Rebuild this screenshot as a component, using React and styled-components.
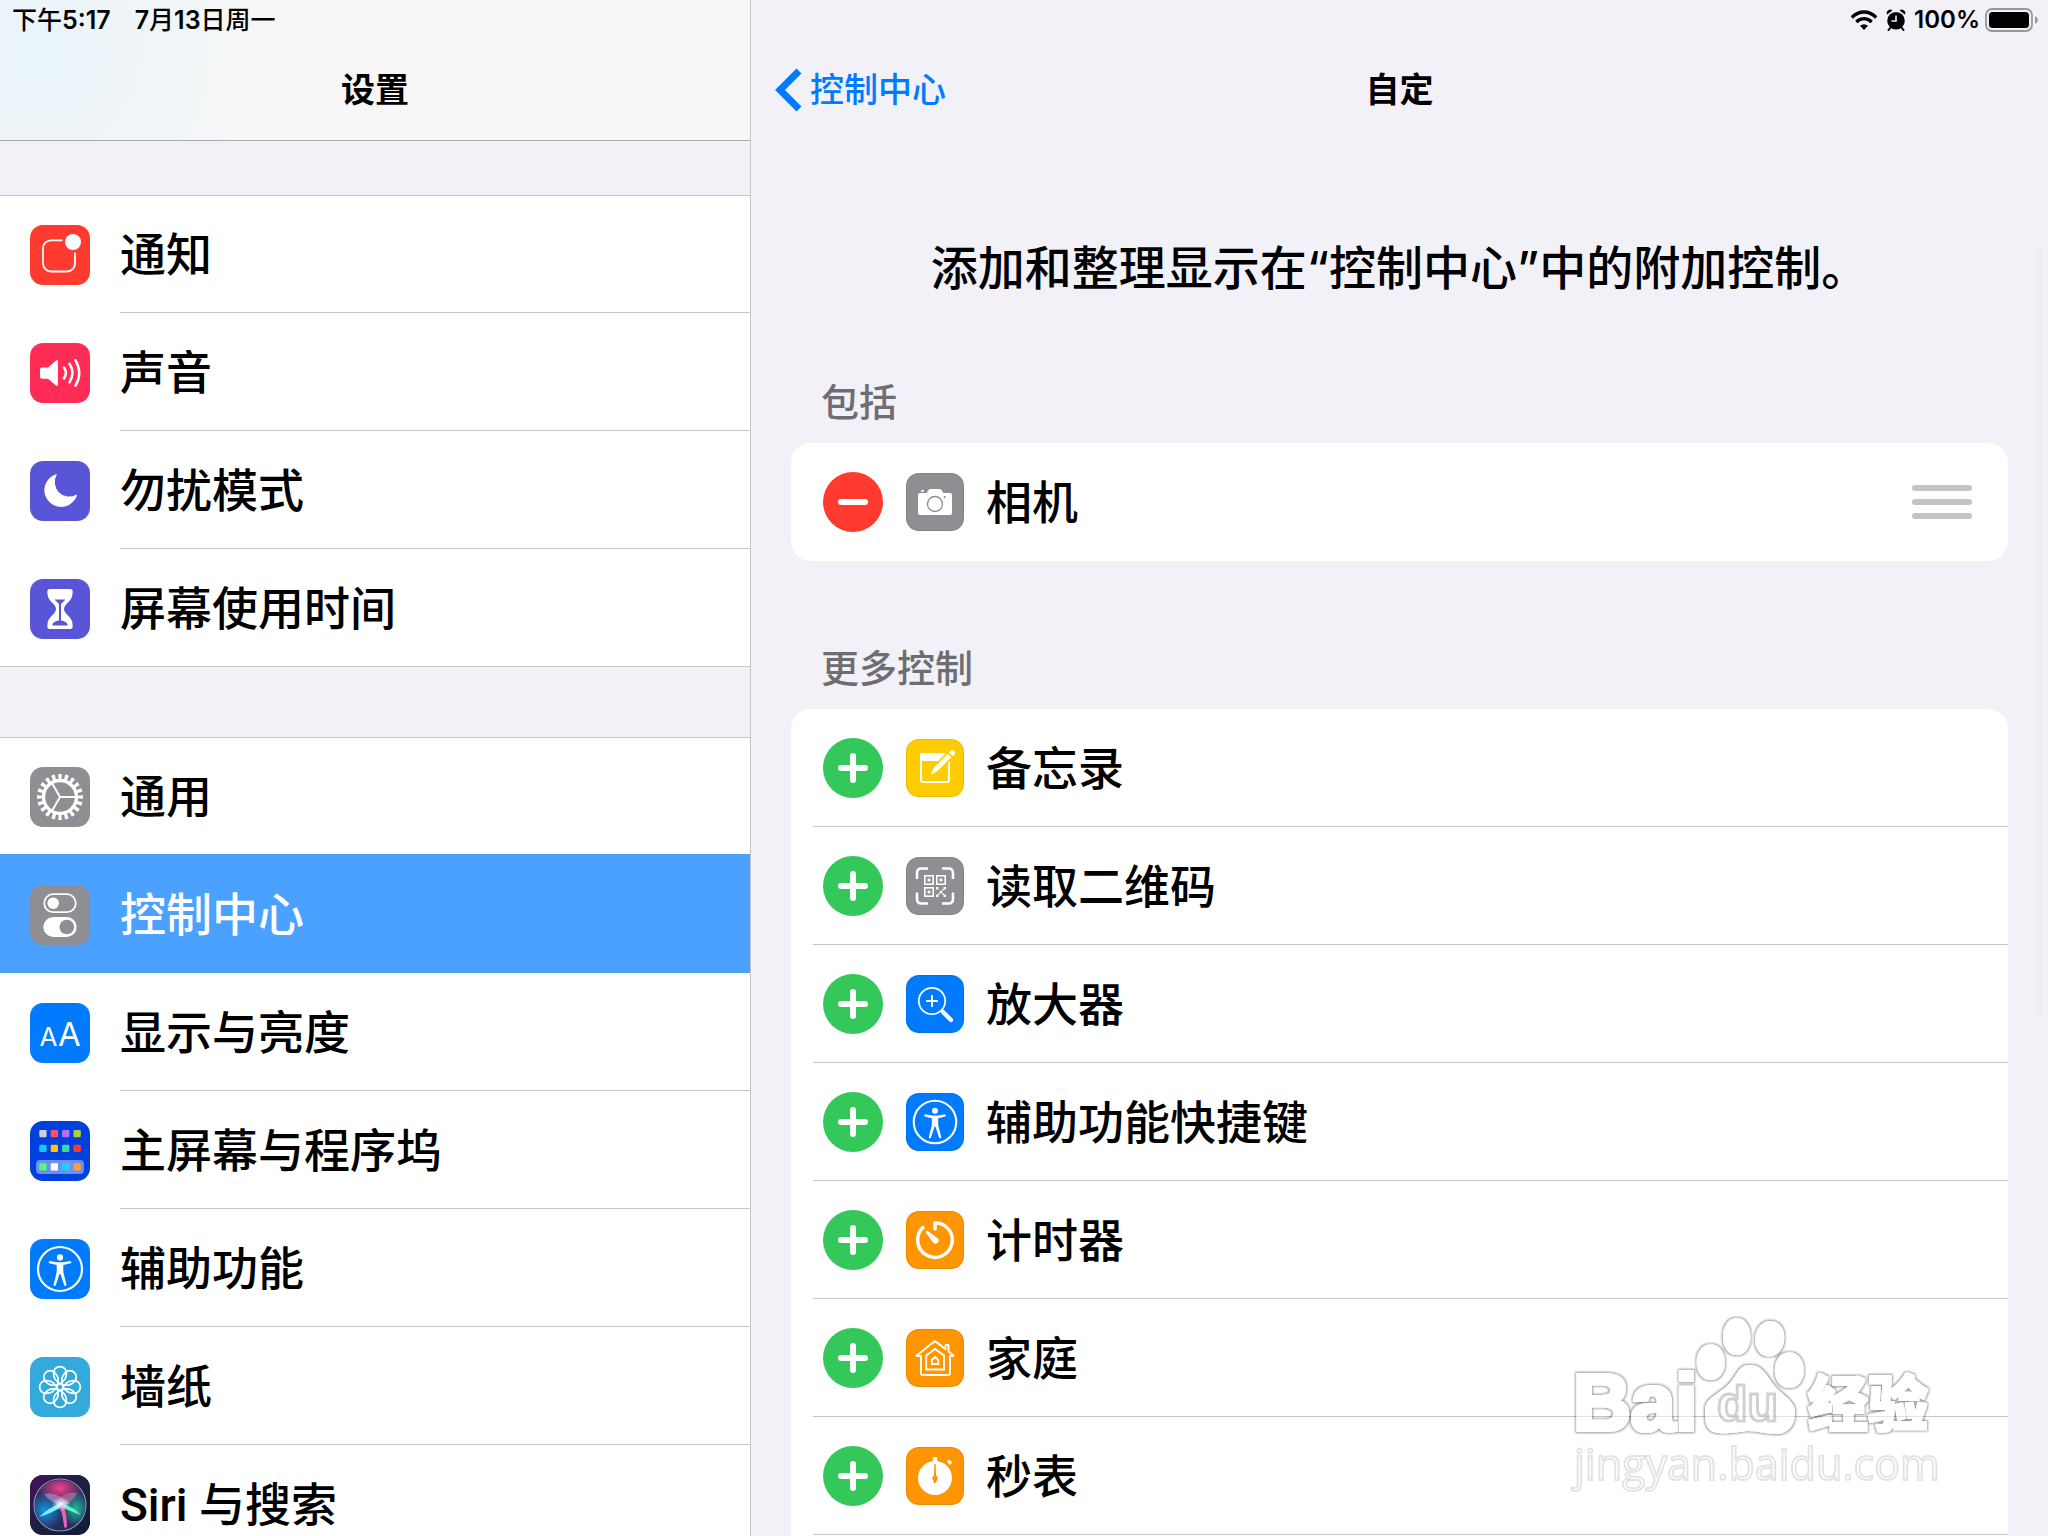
import React from "react";
import styled, { createGlobalStyle, css } from "styled-components";

const color = {
  canvas: "#f2f1f7",
  line: "#c6c6c8",
  blue: "#007aff",
  selected: "#4ba1ff",
  gray: "#8e8e93",
  red: "#ff3b30",
  green: "#34c759",
  orange: "#ff9500",
  indigo: "#5856d6",
};

const GlobalStyle = createGlobalStyle`
  *, *::before, *::after { box-sizing: border-box; }
  body {
    margin: 0;
    background: ${color.canvas};
    color: #000;
    font-family: Roboto, "Noto Sans CJK SC", sans-serif;
    font-size: 46px;
    font-weight: 500;
    line-height: 60px;
  }
  h1, h2, p, ul { margin: 0; padding: 0; font: inherit; }
  ul { list-style: none; }
  a { color: inherit; text-decoration: none; }
  button { border: 0; padding: 0; background: none; font: inherit; color: inherit; }
  svg { display: block; flex: none; }
`;

const Screen = styled.div`
  display: flex;
  height: 100vh;
  overflow: hidden;
`;

const Sidebar = styled.aside`
  flex: none;
  width: 751px;
  border-right: 1px solid ${color.line};
`;

const SidebarHeader = styled.header`
  border-bottom: 1px solid #a9a9ad;
  background:
    radial-gradient(circle at 40px 50px, #e8f5fc 0, rgba(236, 244, 247, 0.8) 90px, rgba(247, 247, 247, 0) 220px),
    #f7f7f7;
`;

const StatusBar = styled.div`
  display: flex;
  align-items: center;
  justify-content: ${(p) => (p.$end ? "flex-end" : "flex-start")};
  gap: ${(p) => (p.$end ? 8 : 24)}px;
  height: 40px;
  padding: 0 ${(p) => (p.$end ? 9 : 12)}px;
  font-family: Inter, "Noto Sans CJK SC", sans-serif;
  font-size: 25px;
  font-weight: 500;
  line-height: 40px;
`;

const Digits = styled.span`
  font-weight: 600;
`;

const BatteryStatus = styled.span`
  display: flex;
  align-items: center;
  gap: 5px;
  font-size: 24px;
  font-weight: 600;
`;

const TitleBar = styled.div`
  display: grid;
  grid-template-columns: 1fr auto 1fr;
  align-items: center;
  height: 100px;
  padding: 0 24px;
  font-size: 34px;
`;

const Title = styled.h1`
  grid-column: 2;
  font-weight: 600;
`;

const BackLink = styled.a`
  display: flex;
  align-items: center;
  gap: 7px;
  color: ${color.blue};
`;

const MenuGroup = styled.ul`
  margin-top: ${(p) => p.$gap}px;
  background: #fff;
  box-shadow: inset 0 1px ${color.line};
`;

const MenuLabel = styled.span`
  flex: 1;
  height: 116px;
  display: flex;
  align-items: center;
  border-bottom: 1px solid ${color.line};
`;

const MenuItem = styled.li`
  &:last-child ${MenuLabel} { border-color: transparent; }
  &:last-child { box-shadow: inset 0 -1px ${color.line}; }
`;

const MenuLink = styled.a`
  display: flex;
  align-items: center;
  gap: 30px;
  height: 118px;
  padding: 2px 0 0 30px;
  ${(p) =>
    p.$selected &&
    css`
      position: relative;
      color: #fff;
      background: ${color.selected};
      box-shadow: 0 -1px ${color.selected};
      ${MenuLabel} { border-color: ${color.selected}; }
    `}
`;

const Tile = styled.span`
  flex: none;
  display: block;
  width: ${(p) => p.$size}px;
  height: ${(p) => p.$size}px;
  border-radius: 13px;
  overflow: hidden;
  background: ${(p) => p.$bg};
  ${(p) => p.$edged && "box-shadow: inset 0 0 0 1px rgba(0, 0, 0, 0.08);"}
`;

const Detail = styled.main`
  flex: 1;
  min-width: 0;
  display: flex;
  flex-direction: column;
`;

const Intro = styled.p`
  margin-top: 98px;
  font-family: Inter, "Noto Sans CJK SC", sans-serif;
  font-size: 47px;
  text-align: center;
`;

const Section = styled.section`
  display: flex;
  flex-direction: column;
  flex: ${(p) => (p.$grow ? "1 0 auto" : "none")};
  margin-top: ${(p) => p.$gap}px;
  padding: 0 40px;
`;

const SectionTitle = styled.h2`
  padding: 1px 0 0 30px;
  margin-bottom: 15px;
  font-size: 38px;
  line-height: 50px;
  color: #6d6d72;
`;

const Card = styled.ul`
  flex: 1;
  border-radius: ${(p) => (p.$grow ? "20px 20px 0 0" : "20px")};
  background: #fff;
`;

const ControlRow = styled.li`
  display: flex;
  align-items: center;
  height: 118px;
  margin-left: 22px;
  padding: 0 36px 0 10px;
  border-bottom: 1px solid ${(p) => (p.$plain ? "transparent" : color.line)};
`;

const RoundButton = styled.button`
  flex: none;
  width: 60px;
  height: 60px;
  margin-right: 23px;
  border-radius: 50%;
  background: ${(p) => p.$bg};
`;

const ControlLabel = styled.span`
  flex: 1;
  padding: 2px 0 0 22px;
`;

const Handle = styled.button`
  display: flex;
  flex-direction: column;
  gap: 8px;
  width: 60px;
`;

const HandleBar = styled.span`
  height: 6px;
  border-radius: 3px;
  background: #c4c4c6;
`;

const ScrollThumb = styled.div`
  position: fixed;
  top: 246px;
  right: 6px;
  width: 6px;
  height: 772px;
  border-radius: 3px;
  background: #eeedf2;
`;

const Watermark = styled.svg`
  position: fixed;
  right: 100px;
  bottom: 34px;
  pointer-events: none;
`;

const W = "#fff";

const Icon = ({ box = 60, children }) => (
  <svg width="100%" height="100%" viewBox={`0 0 ${box} ${box}`} fill="none" aria-hidden="true">
    {children}
  </svg>
);

const NotificationIcon = () => (
  <Icon>
    <path d="M32.5 15.3H21a8 8 0 0 0-8 8V38.500a8 8 0 0 0 8 8H37a8 8 0 0 0 8-8V27.500" stroke={W} strokeWidth="1.800" />
    <circle cx="43" cy="17" r="8" fill={W} />
  </Icon>
);

const SoundIcon = () => (
  <Icon>
    <path d="M12 24.500H18L26 17.500Q28 16.200 28 18.500V41.500Q28 43.800 26 42.500L18 35.800H12Q10 35.800 10 33.800V26.500Q10 24.500 12 24.500Z" fill={W} />
    <path d="M34 24.500Q37.800 30 34 35.500M39.500 20.800Q45.500 30 39.500 39.200M45.500 17.300Q53 30 45.500 42.700" stroke={W} strokeWidth="2.500" strokeLinecap="round" />
  </Icon>
);

const MoonIcon = () => (
  <Icon>
    <path d="M26.300 13.600A16.300 16.300 0 1 0 46.600 34.200A15 15 0 0 1 26.300 13.600Z" fill={W} stroke={W} strokeLinejoin="round" />
  </Icon>
);

const HourglassIcon = () => (
  <Icon>
    <path d="M19.500 10H40.500Q42.700 10 42.700 13Q42.700 19 38.500 23Q34 27 34 30Q34 33 38.500 37Q42.700 41 42.700 47Q42.700 50 40.500 50H19.500Q17.300 50 17.300 47Q17.300 41 21.500 37Q26 33 26 30Q26 27 21.500 23Q17.300 19 17.300 13Q17.300 10 19.500 10Z" fill={W} />
    <path d="M24.500 20.500H35.500L31 25V41.500Q36.500 42.500 37.500 45V46.500H22.500V45Q23.500 42.500 29 41.500V25Z" fill={color.indigo} />
  </Icon>
);

const GearIcon = () => (
  <Icon>
    <circle cx="30" cy="30" r="20.300" stroke={W} strokeWidth="5.400" pathLength="200" strokeDasharray="5.200 4.800" strokeDashoffset="2.600" />
    <circle cx="30" cy="30" r="16.500" stroke={W} strokeWidth="3.400" />
    <path d="M30 30H47M30 30L21.500 15.300M30 30L21.500 44.700" stroke={W} strokeWidth="2" />
  </Icon>
);

const ToggleIcon = () => (
  <Icon>
    <rect x="14.200" y="9.200" width="31.600" height="18" rx="9" stroke={W} strokeWidth="1.800" />
    <circle cx="23.200" cy="18.200" r="5.800" fill={W} />
    <rect x="13.300" y="32" width="33.400" height="20" rx="10" fill={W} />
    <circle cx="36.800" cy="42" r="7.300" fill={color.gray} />
  </Icon>
);

const DisplayIcon = () => (
  <Icon>
    <g fill={W} fontFamily="Inter, sans-serif" fontWeight="400" textAnchor="middle">
      <text x="18.500" y="42.500" fontSize="26">A</text>
      <text x="39.500" y="42.500" fontSize="33">A</text>
    </g>
  </Icon>
);

const appDots = [
  [9, ["#d1d1d1", "#ff4f64", "#bf6bff", "#b0d136"]],
  [23.7, ["#1cc5ff", "#ffc400", "#3bdba3", "#ff3b30"]],
  [42.3, ["#5bf675", "#ffffff", "#1cd2ff", "#ff9c40"]],
];

const HomeScreenIcon = () => (
  <Icon>
    <rect x="6" y="39" width="48" height="14" rx="4" fill="#6a90f0" />
    {appDots.map(([y, fills]) =>
      fills.map((fill, i) => <rect key={fill} x={9.3 + i * 11.4} y={y} width="7.300" height="7.300" rx="1.200" fill={fill} />)
    )}
  </Icon>
);

const AccessibilityIcon = () => (
  <Icon>
    <circle cx="30" cy="30" r="22" stroke={W} strokeWidth="2.200" />
    <circle cx="30" cy="18.400" r="3.100" fill={W} />
    <path d="M19.500 22L27 23.200H33L40.500 22Q42 23.500 40.700 24.300L33.300 26V33L36.500 46Q35.500 47.500 34.300 46.500L30.500 35H29.500L25.700 46.500Q24.500 47.500 23.500 46L26.700 33V26L19.300 24.300Q18 23.500 19.500 22Z" fill={W} />
  </Icon>
);

const WallpaperIcon = () => (
  <Icon>
    {[0, 45, 90, 135, 180, 225, 270, 315].map((a) => (
      <path key={a} transform={`rotate(${a} 30 30)`} d="M30 27L25.200 22.500Q23.600 20 23.600 16A6.400 6.400 0 0 1 36.400 16Q36.400 20 34.800 22.500Z" stroke={W} strokeWidth="1.700" />
    ))}
    <circle cx="30" cy="30" r="3.500" stroke={W} strokeWidth="1.600" />
  </Icon>
);

const SiriIcon = () => (
  <Icon>
    <defs>
      <linearGradient id="siriBack" x1="0" y1="0" x2="1" y2="1">
        <stop offset="0" stopColor="#4a0f5c" />
        <stop offset="0.5" stopColor="#1c2140" />
        <stop offset="1" stopColor="#101a36" />
      </linearGradient>
      <radialGradient id="siriPink"><stop stopColor="#f0408c" /><stop offset="1" stopColor="#f0408c" stopOpacity="0" /></radialGradient>
      <radialGradient id="siriBlue"><stop stopColor="#1794e0" /><stop offset="1" stopColor="#1794e0" stopOpacity="0" /></radialGradient>
      <radialGradient id="siriTeal"><stop stopColor="#20b89a" /><stop offset="1" stopColor="#20b89a" stopOpacity="0" /></radialGradient>
      <radialGradient id="siriGlow"><stop stopColor="#fff" /><stop offset="1" stopColor="#cfe8ff" stopOpacity="0" /></radialGradient>
      <clipPath id="siriOrb"><circle cx="30" cy="30" r="25" /></clipPath>
    </defs>
    <rect width="60" height="60" fill="url(#siriBack)" />
    <circle cx="30" cy="30" r="26" fill="#252b5c" stroke="#8492b4" strokeWidth="1.200" />
    <g clipPath="url(#siriOrb)">
      <ellipse cx="30" cy="13" rx="24" ry="17" fill="url(#siriPink)" />
      <ellipse cx="15" cy="36" rx="19" ry="19" fill="url(#siriBlue)" />
      <ellipse cx="46" cy="34" rx="15" ry="18" fill="url(#siriTeal)" />
      <path d="M14 19Q27 16 40 29L31 30Q20 27 14 19Z" fill="#d8b2e8" opacity="0.45" />
      <path d="M47 18Q34 15 25 30L33 30Q43 27 47 18Z" fill="#f08bc8" opacity="0.4" />
      <path d="M31 28Q20 32 9 42Q22 38 31 32Z" fill="#79f0ff" />
      <path d="M31 28Q44 32 51 40Q42 37 31 32Z" fill="#5ef0c4" />
      <path d="M30 29H33.500Q37 42 37 52L34.500 53Q33 42 30 31Z" fill="#f55eb8" />
      <ellipse cx="31" cy="29" rx="10" ry="7" fill="url(#siriGlow)" />
    </g>
  </Icon>
);

const CameraIcon = () => (
  <Icon box={58}>
    <path d="M14 20H20.500L22.500 17Q23.300 16 24.500 16H33.500Q34.700 16 35.500 17L37.500 20H44Q46 20 46 22V40Q46 42 44 42H14Q12 42 12 40V22Q12 20 14 20ZM15.500 17H17.800V18.800H14.800Z" fill={W} />
    <circle cx="29" cy="31" r="7.500" stroke={color.gray} strokeWidth="1.300" />
    <circle cx="38.700" cy="24" r="1.100" fill={color.gray} />
  </Icon>
);

const NotesIcon = () => (
  <Icon box={58}>
    <rect x="15" y="15" width="28" height="28" rx="2" stroke={W} strokeWidth="2" />
    <path d="M14 16Q14 14 16 14H43V22H14Z" fill={W} />
    <path d="M24.500 36L28.500 28L45.500 10.500L49.500 14.500L32.500 31.500Z" stroke="#ffcc00" strokeWidth="3" fill="#ffcc00" />
    <path d="M25 35.500Q26.500 30.500 28.500 28L41.800 14.700L45.300 18.200L32 31.500Q29.500 33.500 25 35.500Z" fill={W} />
    <path d="M43 13.500L45 11.500Q46.300 10.500 47.500 11.500L48.700 12.700Q49.700 14 48.600 15.200L46.600 17.100Z" fill={W} />
  </Icon>
);

const QrIcon = () => (
  <Icon box={58}>
    <path d="M11 22V16Q11 11.500 15.500 11.500H22M36 11.500H42.500Q47 11.500 47 16V22M47 35.500V42Q47 46.500 42.500 46.500H36M22 46.500H15.500Q11 46.500 11 42V35.500" stroke={W} strokeWidth="2.600" />
    {[[18, 18], [30, 18], [18, 30]].map(([x, y]) => (
      <g key={`${x}-${y}`}>
        <rect x={x + 0.8} y={y + 0.8} width="8.400" height="8.400" stroke={W} strokeWidth="1.600" />
        <rect x={x + 3.6} y={y + 3.6} width="2.800" height="2.800" fill={W} />
      </g>
    ))}
    <path d="M30 30h2.400v2.400h-2.400zM37.500 30h2.400v2.400h-2.400zM33.700 33.700h2.600v2.600h-2.600zM30 37.500h2.400v2.400h-2.400zM37.500 37.500h2.400v2.400h-2.400zM36.300 32h1.400v1.400h-1.400zM32.300 36.300h1.400v1.400h-1.400zM36.300 36.300h1.400v1.400h-1.400z" fill={W} />
  </Icon>
);

const MagnifierIcon = () => (
  <Icon box={58}>
    <circle cx="26" cy="26" r="13.200" stroke={W} strokeWidth="1.700" />
    <path d="M20 26H32M26 20V32" stroke={W} strokeWidth="1.900" />
    <path d="M35.500 35.500L37 37" stroke={W} strokeWidth="2.500" />
    <path d="M37 37L45 45" stroke={W} strokeWidth="4.200" strokeLinecap="round" />
  </Icon>
);

const TimerIcon = () => (
  <Icon box={58}>
    <path d="M29 18V11.700A17.300 17.300 0 1 1 17 16.500" stroke={W} strokeWidth="3.500" strokeLinecap="round" strokeLinejoin="round" />
    <path d="M20 20.300Q20.800 19.300 22 20L31 26.700A3.200 3.200 0 1 1 26.700 31L19.900 21.800Q19.500 21 20 20.300Z" fill={W} />
  </Icon>
);

const HouseIcon = () => (
  <Icon box={58}>
    <path d="M15 26V44.500Q15 46 16.500 46H42.500Q44 46 44 44.500V26" stroke={W} strokeWidth="1.900" />
    <path d="M10 27L29 12L39.500 20.200V16H42.500V22.600L48 27M10 27H15M44 27H48" stroke={W} strokeWidth="1.900" strokeLinejoin="round" />
    <path d="M20.200 26.500L29 20L38 26.500V40.500H20.200Z" stroke={W} strokeWidth="1.900" />
    <path d="M25.800 31L29 28L32.300 31V35H25.800Z" stroke={W} strokeWidth="1.900" />
  </Icon>
);

const StopwatchIcon = () => (
  <Icon box={58}>
    <circle cx="29" cy="31" r="17" fill={W} />
    <rect x="26.800" y="10" width="4.400" height="6" rx="1" fill={W} />
    <rect x="41.200" y="13.500" width="4.600" height="3.400" rx="1" fill={W} transform="rotate(45 43.500 15.200)" />
    <path d="M28.300 17H29.700L30 28.200L32 31L29.700 36H28.300L26 31L28 28.200Z" fill={color.orange} />
  </Icon>
);

const WifiIcon = () => (
  <svg width="28" height="22" viewBox="0 0 28 22" aria-label="Wi-Fi">
    <path d="M1.800 8.500Q7.500 3 14 3T26.200 8.500M6.300 13Q9.800 9.700 14 9.700T21.700 13" fill="none" stroke="#000" strokeWidth="3.300" />
    <path d="M10 16.800Q14 13.800 18 16.800L14 21Z" />
  </svg>
);

const AlarmIcon = () => (
  <svg width="20" height="22" viewBox="0 0 20 22" aria-label="闹钟">
    <circle cx="10" cy="11.800" r="8.800" />
    <path d="M1 5.500A3.500 3.500 0 0 1 6.500 1.500ZM19 5.500A3.500 3.500 0 0 0 13.500 1.500Z" />
    <path d="M4.500 18.500L2.500 21M15.500 18.500L17.500 21" stroke="#000" strokeWidth="2" strokeLinecap="round" />
    <path d="M10 6.500V12H5.500" fill="none" stroke={color.canvas} strokeWidth="1.600" />
  </svg>
);

const BatteryIcon = () => (
  <svg width="54" height="24" viewBox="0 0 54 24" aria-label="电池">
    <rect x="1" y="1" width="46" height="22" rx="6" fill="none" stroke="#98979c" strokeWidth="1.800" />
    <rect x="4" y="4" width="40" height="16" rx="3.500" />
    <path d="M50 8Q53 9.500 53 12T50 16Z" fill="#98979c" />
  </svg>
);

const menuGroups = [
  {
    gap: 54,
    items: [
      ["通知", color.red, NotificationIcon],
      ["声音", "#ff2d55", SoundIcon],
      ["勿扰模式", color.indigo, MoonIcon],
      ["屏幕使用时间", color.indigo, HourglassIcon],
    ],
  },
  {
    gap: 70,
    items: [
      ["通用", color.gray, GearIcon],
      ["控制中心", color.gray, ToggleIcon],
      ["显示与亮度", color.blue, DisplayIcon],
      ["主屏幕与程序坞", "#0040dd", HomeScreenIcon],
      ["辅助功能", color.blue, AccessibilityIcon],
      ["墙纸", "#34aadc", WallpaperIcon],
      ["Siri 与搜索", "#1c2140", SiriIcon],
    ],
  },
];

const moreControls = [
  ["备忘录", "#ffcc00", NotesIcon],
  ["读取二维码", color.gray, QrIcon],
  ["放大器", color.blue, MagnifierIcon],
  ["辅助功能快捷键", color.blue, AccessibilityIcon],
  ["计时器", color.orange, TimerIcon],
  ["家庭", color.orange, HouseIcon],
  ["秒表", color.orange, StopwatchIcon],
];

const ToggleButton = ({ add, name }) => (
  <RoundButton type="button" $bg={add ? color.green : color.red} aria-label={`${add ? "添加" : "移除"}${name}`}>
    <Icon>
      <path d={add ? "M18 30H42M30 18V42" : "M18 30H42"} stroke={W} strokeWidth="6" strokeLinecap="round" />
    </Icon>
  </RoundButton>
);

/* Turns a solid shape into a translucent white body with a soft grey rim. */
const Emboss = ({ id, body, rim, shade }) => (
  <filter id={id} x="-10%" y="-10%" width="120%" height="120%">
    <feMorphology in="SourceAlpha" operator="dilate" radius={body} result="body" />
    <feMorphology in="SourceAlpha" operator="dilate" radius={rim} result="wide" />
    <feGaussianBlur in="wide" stdDeviation="0.900" result="glow" />
    <feComposite in="glow" in2="body" operator="out" result="ring" />
    <feFlood floodColor="#000" floodOpacity={shade} />
    <feComposite in2="ring" operator="in" result="shadow" />
    <feFlood floodColor="#fff" floodOpacity="0.500" />
    <feComposite in2="body" operator="in" result="face" />
    <feMerge>
      <feMergeNode in="shadow" />
      <feMergeNode in="face" />
    </feMerge>
  </filter>
);

const BaiduMark = () => (
  <Watermark width="380" height="190" viewBox="0 0 380 190" aria-hidden="true">
    <defs>
      <Emboss id="embossLogo" body="1" rim="2" shade="0.400" />
    </defs>
    <g filter="url(#embossLogo)">
      <ellipse cx="142.700" cy="50.300" rx="13" ry="16.700" />
      <ellipse cx="168.700" cy="24.700" rx="12.700" ry="17.400" />
      <ellipse cx="201.700" cy="26.700" rx="13.400" ry="16.700" transform="rotate(8 201.700 26.700)" />
      <ellipse cx="221.300" cy="58.300" rx="13.400" ry="16.700" />
      <path d="M182 54C192 54 197 63 204 73S226 89 226 101S218 121 208 121S192 118 182 118S165 121 152 120S138 110 138 99S150 84 160 75S171 54 182 54Z" />
      <text x="5" y="118" fontSize="80" fontWeight="700" fontFamily="'Liberation Sans', Arial, sans-serif" stroke="#000" strokeWidth="2">Bai</text>
      <text x="240" y="114" fontSize="60" fontWeight="900" fontFamily="'Noto Sans CJK SC', sans-serif">经验</text>
    </g>
    <text x="149" y="109" fontSize="50" fontWeight="700" fontFamily="'Liberation Sans', Arial, sans-serif" fill="#fff" fillOpacity="0.400" stroke="#000" strokeOpacity="0.180" strokeWidth="3">du</text>
    <text x="6" y="168" fontSize="43" fontWeight="400" fontFamily="'Open Sans', 'Noto Sans', sans-serif" fill="#fff" fillOpacity="0.500" stroke="#000" strokeOpacity="0.110" strokeWidth="2">jingyan.baidu.com</text>
  </Watermark>
);

export default function App() {
  return (
    <>
      <GlobalStyle />
      <Screen lang="zh-CN">
        <Sidebar>
          <SidebarHeader>
            <StatusBar>
              <span>下午<Digits>5:17</Digits></span>
              <span><Digits>7</Digits>月<Digits>13</Digits>日周一</span>
            </StatusBar>
            <TitleBar>
              <Title>设置</Title>
            </TitleBar>
          </SidebarHeader>
          <nav aria-label="设置">
            {menuGroups.map(({ gap, items }) => (
              <MenuGroup key={gap} $gap={gap}>
                {items.map(([name, bg, Glyph]) => {
                  const selected = name === "控制中心";
                  return (
                    <MenuItem key={name}>
                      <MenuLink href="#" $selected={selected} aria-current={selected ? "page" : undefined}>
                        <Tile $size={60} $bg={bg}><Glyph /></Tile>
                        <MenuLabel>{name}</MenuLabel>
                      </MenuLink>
                    </MenuItem>
                  );
                })}
              </MenuGroup>
            ))}
          </nav>
        </Sidebar>

        <Detail>
          <StatusBar $end>
            <WifiIcon />
            <AlarmIcon />
            <BatteryStatus>
              100%
              <BatteryIcon />
            </BatteryStatus>
          </StatusBar>
          <TitleBar>
            <BackLink href="#">
              <svg width="28" height="44" viewBox="0 0 28 44" aria-hidden="true">
                <path d="M24 3L5 22L24 41" fill="none" stroke={color.blue} strokeWidth="7" />
              </svg>
              控制中心
            </BackLink>
            <Title>自定</Title>
          </TitleBar>
          <Intro>添加和整理显示在“控制中心”中的附加控制。</Intro>

          <Section $gap={79}>
            <SectionTitle>包括</SectionTitle>
            <Card>
              <ControlRow $plain>
                <ToggleButton name="相机" />
                <Tile $size={58} $bg={color.gray} $edged><CameraIcon /></Tile>
                <ControlLabel>相机</ControlLabel>
                <Handle type="button" aria-label="移动相机">
                  <HandleBar />
                  <HandleBar />
                  <HandleBar />
                </Handle>
              </ControlRow>
            </Card>
          </Section>

          <Section $gap={82} $grow>
            <SectionTitle>更多控制</SectionTitle>
            <Card $grow>
              {moreControls.map(([name, bg, Glyph]) => (
                <ControlRow key={name}>
                  <ToggleButton add name={name} />
                  <Tile $size={58} $bg={bg} $edged><Glyph /></Tile>
                  <ControlLabel>{name}</ControlLabel>
                </ControlRow>
              ))}
            </Card>
          </Section>
        </Detail>
      </Screen>
      <ScrollThumb />
      <BaiduMark />
    </>
  );
}
